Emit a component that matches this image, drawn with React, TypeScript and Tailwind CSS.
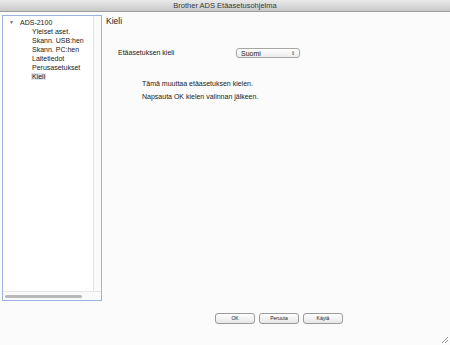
import React from "react";

const items = ["Yleiset aset.", "Skann. USB:hen", "Skann. PC:hen", "Laitetiedot", "Perusasetukset", "Kieli"];

const MacButton: React.FC<{ label: string }> = ({ label }) => (
  <button className="w-[40px] h-[11px] rounded-[3px] border border-[#9a9a9a] bg-gradient-to-b from-[#ffffff] to-[#e6e6e6] text-[5px] leading-none text-[#222] flex items-center justify-center">
    {label}
  </button>
);

export default function App() {
  return (
    <div
      className="w-[450px] h-[345px] bg-[#fbfbfb] flex flex-col relative overflow-hidden text-[#1a1a1a]"
      style={{ fontFamily: '"Liberation Sans", Arial, sans-serif' }}
    >
      {/* Title bar */}
      <div className="h-[12px] shrink-0 bg-gradient-to-b from-[#e9e9e9] to-[#c9c9c9] border-b border-[#9c9c9c] flex items-center justify-center">
        <span className="text-[7.5px] leading-none text-[#3a3a3a]">Brother ADS Etäasetusohjelma</span>
      </div>

      <div className="flex pt-[3px]">
        {/* Tree panel */}
        <div className="ml-[2px] w-[100px] h-[286px] border border-[#9db1df] bg-white flex flex-col">
          <div className="flex flex-1">
            <div className="flex-1 pt-[2px] text-[7px] leading-[9px]">
              <div className="flex items-center">
                <span className="ml-[6px] w-[10px] text-[5px] text-[#666]">▼</span>
                <span className="ml-[1px]">ADS-2100</span>
              </div>
              {items.map((it) => (
                <div key={it} className="pl-[29px]">
                  <span className={it === "Kieli" ? "bg-[#dde4f3] px-[1px] -ml-[1px]" : ""}>{it}</span>
                </div>
              ))}
            </div>
            <div className="w-[7px] mr-[1px] border-l border-[#e2e2e2] bg-[#fafafa]" />
          </div>
          <div className="h-[9px] border-t border-[#e6e6e6] bg-[#fafafa] flex items-center px-[2px]">
            <div className="w-[77px] h-[3px] rounded-full bg-[#b9b9b9]" />
          </div>
        </div>

        {/* Content */}
        <div className="ml-[4px] flex-1 flex flex-col">
          <div className="text-[8.5px] leading-[10px] mt-[1px]">Kieli</div>
          <div className="flex items-center mt-[22px]">
            <span className="ml-[12px] w-[118px] text-[7px]">Etäasetuksen kieli</span>
            <div className="w-[64px] h-[10px] rounded-[3px] border border-[#a6a6a6] bg-gradient-to-b from-white to-[#ececec] flex items-center justify-between px-[4px]">
              <span className="text-[7px] leading-none">Suomi</span>
              <span className="text-[5px] leading-none text-[#444]">⇕</span>
            </div>
          </div>
          <div className="ml-[36px] mt-[18px] text-[7px] leading-[13px]">
            <div>Tämä muuttaa etäasetuksen kielen.</div>
            <div>Napsauta OK kielen valinnan jälkeen.</div>
          </div>
        </div>
      </div>

      {/* Buttons */}
      <div className="flex gap-[4px] ml-[215px] mt-[12px]">
        <MacButton label="OK" />
        <MacButton label="Peruuta" />
        <MacButton label="Käytä" />
      </div>

      {/* Resize grip */}
      <svg className="absolute right-[1px] bottom-[1px]" width="9" height="9" viewBox="0 0 9 9">
        <path d="M8 2 L2 8 M8 5 L5 8" stroke="#9a9a9a" strokeWidth="1" />
      </svg>
    </div>
  );
}
